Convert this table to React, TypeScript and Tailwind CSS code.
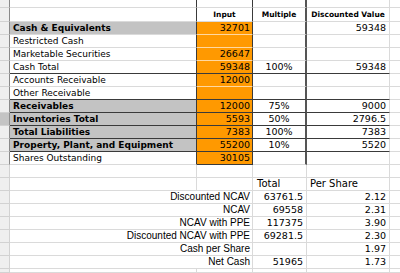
type TopRow = {
  label: string;
  bold?: boolean;
  input?: string;
  mult?: string;
  disc?: string;
  dark?: boolean;
  sel?: boolean;
};

type NcavRow = { label: string; total?: string; per: string };

const topRows: TopRow[] = [
  { label: "Cash & Equivalents", bold: true, input: "32701", disc: "59348" },
  { label: "Restricted Cash" },
  { label: "Marketable Securities", input: "26647" },
  { label: "Cash Total", input: "59348", mult: "100%", disc: "59348", dark: true },
  { label: "Accounts Receivable", input: "12000" },
  { label: "Other Receivable", dark: true },
  { label: "Receivables", bold: true, input: "12000", mult: "75%", disc: "9000", dark: true },
  { label: "Inventories Total", bold: true, input: "5593", mult: "50%", disc: "2796.5", dark: true, sel: true },
  { label: "Total Liabilities", bold: true, input: "7383", mult: "100%", disc: "7383", dark: true },
  { label: "Property, Plant, and Equipment", bold: true, input: "55200", mult: "10%", disc: "5520", dark: true },
  { label: "Shares Outstanding", input: "30105" },
];

const ncavRows: NcavRow[] = [
  { label: "Discounted NCAV", total: "63761.5", per: "2.12" },
  { label: "NCAV", total: "69558", per: "2.31" },
  { label: "NCAV with PPE", total: "117375", per: "3.90" },
  { label: "Discounted NCAV with PPE", total: "69281.5", per: "2.30" },
  { label: "Cash per Share", per: "1.97" },
  { label: "Net Cash", total: "51965", per: "1.73" },
];

// row header strip on the far left
const RowHead = ({ h, sel, dark }: { h: string; sel?: boolean; dark?: boolean }) => (
  <div
    className={`${h} w-[10px] shrink-0 border-b border-r border-b-[#d2d2d2] ${
      dark ? "border-r-[#8a8a8a]" : "border-r-[#d2d2d2]"
    } ${sel ? "bg-[#c4c4c4]" : "bg-[#efefef]"}`}
  />
);

// empty rows above the table header
const BlankTop = ({ h }: { h: string }) => (
  <div className="flex">
    <RowHead h={h} dark />
    <div className={`${h} w-[187px] border-b border-r border-b-[#dadada] border-r-[#3a3a3a]`} />
    <div className={`${h} w-[56px] border-b border-r border-b-[#dadada] border-r-[#3a3a3a]`} />
    <div className={`${h} w-[54px] border-b border-r-2 border-b-[#dadada] border-r-[#555]`} />
    <div className={`${h} w-[83px] border-b border-r border-[#dadada]`} />
    <div className={`${h} w-[10px] border-b border-[#dadada]`} />
  </div>
);

const Blank = ({ h }: { h: string }) => (
  <div className="flex">
    <RowHead h={h} />
    <div className={`${h} w-[187px] border-b border-r border-[#dadada]`} />
    <div className={`${h} w-[56px] border-b border-r border-[#dadada]`} />
    <div className={`${h} w-[54px] border-b border-r border-[#dadada]`} />
    <div className={`${h} w-[83px] border-b border-r border-[#dadada]`} />
    <div className={`${h} w-[10px] border-b border-[#dadada]`} />
  </div>
);

export default function App() {
  return (
    <div className="w-[400px] h-[273px] overflow-hidden bg-white text-black font-['DejaVu_Sans',sans-serif]">
      <BlankTop h="h-[8px]" />

      {/* column headings */}
      <div className="flex font-bold text-[7.5px] leading-none">
        <RowHead h="h-[14px]" dark />
        <div className="h-[14px] w-[187px] border-b border-r border-b-[#dadada] border-r-[#3a3a3a]" />
        <div className="h-[14px] w-[56px] border-b border-r border-b-[#dadada] border-r-[#3a3a3a] flex items-end justify-center pb-[3px]">
          Input
        </div>
        <div className="h-[14px] w-[54px] border-b border-r-2 border-b-[#dadada] border-r-[#555] flex items-end justify-center pb-[3px]">
          Multiple
        </div>
        <div className="h-[14px] w-[83px] border-b border-r border-[#dadada] flex items-end justify-center pb-[3px]">
          Discounted Value
        </div>
        <div className="h-[14px] w-[10px] border-b border-[#dadada]" />
      </div>

      {topRows.map((r, i) => {
        const last = i === topRows.length - 1;
        const bottom = r.dark ? "border-b-[#3a3a3a]" : "border-b-[#dadada]";
        return (
          <div key={r.label} className="flex text-[9px] leading-[12px]">
            <RowHead h="h-[13px]" sel={r.sel} dark />
            <div
              className={`h-[13px] w-[187px] border-b border-r border-r-[#3a3a3a] ${bottom} pl-[3px] whitespace-nowrap ${
                r.bold ? "bg-[#c3c3c3] font-bold" : ""
              }`}
            >
              {r.label}
            </div>
            <div
              className={`h-[13px] w-[56px] border-b border-r border-r-[#3a3a3a] bg-[#ff9900] text-right pr-[2px] text-[9.5px] ${
                r.dark || last ? "border-b-[#3a3a3a]" : "border-b-[#ffd8a0]"
              }`}
            >
              {r.input}
            </div>
            <div className={`h-[13px] w-[54px] border-b border-r-2 border-r-[#555] ${bottom} text-center text-[9.5px]`}>
              {r.mult}
            </div>
            <div className={`h-[13px] w-[83px] border-b border-r border-r-[#dadada] ${bottom} text-right pr-[3px] text-[9.5px]`}>
              {r.disc}
            </div>
            <div className="h-[13px] w-[10px] border-b border-[#dadada]" />
          </div>
        );
      })}

      <Blank h="h-[13px]" />

      {/* summary heading */}
      <div className="flex text-[10px] leading-[12px]">
        <RowHead h="h-[13px]" />
        <div className="h-[13px] w-[187px] border-b border-r border-[#dadada]" />
        <div className="h-[13px] w-[56px] border-b border-r border-[#dadada]" />
        <div className="h-[13px] w-[54px] border-b border-r border-[#dadada] pl-[4px]">Total</div>
        <div className="h-[13px] w-[83px] border-b border-r border-[#dadada] pl-[3px]">Per Share</div>
        <div className="h-[13px] w-[10px] border-b border-[#dadada]" />
      </div>

      {ncavRows.map((r) => (
        <div key={r.label} className="flex leading-[12px]">
          <RowHead h="h-[13px]" />
          <div className="h-[13px] w-[243px] border-b border-r border-[#dadada] text-right pr-[2px] text-[10px] font-['Liberation_Sans',sans-serif]">
            {r.label}
          </div>
          <div className="h-[13px] w-[54px] border-b border-r border-[#dadada] text-right pr-[3px] text-[9.5px]">
            {r.total}
          </div>
          <div className="h-[13px] w-[83px] border-b border-r border-[#dadada] text-right pr-[3px] text-[9.5px]">
            {r.per}
          </div>
          <div className="h-[13px] w-[10px] border-b border-[#dadada]" />
        </div>
      ))}

      <Blank h="h-[4px]" />
    </div>
  );
}
